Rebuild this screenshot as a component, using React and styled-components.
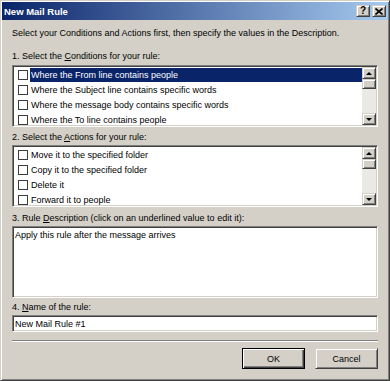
import styled, { createGlobalStyle } from "styled-components";

const CONDITIONS = [
  "Where the From line contains people",
  "Where the Subject line contains specific words",
  "Where the message body contains specific words",
  "Where the To line contains people",
];

const ACTIONS = [
  "Move it to the specified folder",
  "Copy it to the specified folder",
  "Delete it",
  "Forward it to people",
];

const GlobalStyle = createGlobalStyle`
  html, body {
    margin: 0;
    padding: 0;
    background: #d4d0c8;
  }
  body {
    font-family: "Liberation Sans", Arial, sans-serif;
    font-size: 9px;
    color: #000;
  }
`;

const raised = `
  border: 1px solid;
  border-color: #d4d0c8 #404040 #404040 #d4d0c8;
  box-shadow: inset 1px 1px #fff, inset -1px -1px #808080;
  background: #d4d0c8;
`;

const sunken = `
  border: 1px solid;
  border-color: #808080 #fff #fff #808080;
  box-shadow: inset 1px 1px #404040, inset -1px -1px #d4d0c8;
  background: #fff;
`;

const Window = styled.div`
  box-sizing: border-box;
  width: 390px;
  height: 381px;
  padding: 1px;
  border: 1px solid;
  border-color: #d4d0c8 #404040 #404040 #d4d0c8;
  box-shadow: inset 1px 1px #fff, inset -1px -1px #808080;
  background: #d4d0c8;
  display: flex;
  flex-direction: column;
`;

const TitleBar = styled.div`
  height: 18px;
  display: flex;
  align-items: center;
  padding-left: 2px;
  background: linear-gradient(to right, #0a246a, #a6caf0);
  color: #fff;
  font-weight: bold;
  font-size: 9.5px;
`;

const TitleText = styled.span`
  flex: 1;
`;

const TitleButton = styled.div`
  box-sizing: border-box;
  width: 14px;
  height: 12px;
  margin-left: 2px;
  ${raised}
  display: flex;
  align-items: center;
  justify-content: center;
  color: #000;
  font-weight: bold;
  font-size: 10px;
  line-height: 1;
  &:last-child {
    margin-right: 2px;
  }
`;

const Body = styled.div`
  flex: 1;
  display: flex;
  flex-direction: column;
  padding: 0 10px;
`;

const Text = styled.div`
  line-height: 14px;
  margin-top: ${({ $top }) => $top}px;
  white-space: nowrap;
`;

const ListBox = styled.div`
  box-sizing: border-box;
  height: 62px;
  margin-top: ${({ $top }) => $top}px;
  padding: 1px;
  ${sunken}
  display: flex;
  overflow: hidden;
`;

const Rows = styled.div`
  flex: 1;
  display: flex;
  flex-direction: column;
  overflow: hidden;
`;

const Row = styled.div`
  flex: none;
  height: 15px;
  display: flex;
  align-items: center;
`;

const Check = styled.span`
  box-sizing: border-box;
  width: 10px;
  height: 10px;
  margin-left: 4px;
  border: 1px solid #3c3c3c;
  background: #fff;
  flex: none;
`;

const RowLabel = styled.span`
  flex: 1;
  margin-left: 2px;
  padding-left: 1px;
  height: 14px;
  line-height: 14px;
  white-space: nowrap;
  background: ${({ $selected }) => ($selected ? "#0a246a" : "transparent")};
  color: ${({ $selected }) => ($selected ? "#fff" : "#000")};
`;

const Scrollbar = styled.div`
  width: 14px;
  display: flex;
  flex-direction: column;
  background-color: #ebe9e5;
`;

const ScrollButton = styled.div`
  box-sizing: border-box;
  height: 12px;
  ${raised}
  display: flex;
  align-items: center;
  justify-content: center;
`;

const Thumb = styled.div`
  box-sizing: border-box;
  height: 10px;
  ${raised}
`;

const Track = styled.div`
  flex: 1;
`;

const Arrow = styled.span`
  width: 0;
  height: 0;
  border-left: 3px solid transparent;
  border-right: 3px solid transparent;
  ${({ $down }) =>
    $down ? "border-top: 3px solid #000;" : "border-bottom: 3px solid #000;"}
`;

const TextArea = styled.div`
  box-sizing: border-box;
  height: 72px;
  margin-top: 1px;
  padding: 1px 2px;
  ${sunken}
  line-height: 14px;
`;

const NameInput = styled.div`
  box-sizing: border-box;
  height: 17px;
  margin-top: 1px;
  padding: 1px 2px 0 2px;
  ${sunken}
  line-height: 14px;
`;

const Separator = styled.div`
  margin-top: 8px;
  border-top: 1px solid #808080;
  border-bottom: 1px solid #fff;
`;

const ButtonRow = styled.div`
  margin-top: 6px;
  display: flex;
  justify-content: flex-end;
  gap: 10px;
`;

const Button = styled.div`
  box-sizing: border-box;
  width: 63px;
  height: 21px;
  display: flex;
  align-items: center;
  justify-content: center;
  ${raised}
  ${({ $default }) =>
    $default &&
    `
    border-color: #000;
    box-shadow: inset 1px 1px #fff, inset -1px -1px #404040, inset -2px -2px #808080;
  `}
`;

const CheckList = ({ items, top, selected }) => (
  <ListBox $top={top}>
    <Rows>
      {items.map((item, i) => (
        <Row key={item}>
          <Check />
          <RowLabel $selected={i === selected}>{item}</RowLabel>
        </Row>
      ))}
    </Rows>
    <Scrollbar>
      <ScrollButton>
        <Arrow />
      </ScrollButton>
      <Thumb />
      <Track />
      <ScrollButton>
        <Arrow $down />
      </ScrollButton>
    </Scrollbar>
  </ListBox>
);

const App = () => {
  return (
    <>
      <GlobalStyle />
      <Window>
        <TitleBar>
          <TitleText>New Mail Rule</TitleText>
          <TitleButton>?</TitleButton>
          <TitleButton>
            <svg width="8" height="7" viewBox="0 0 8 7">
              <path d="M0.5 0.5 L7.5 6.5 M7.5 0.5 L0.5 6.5" stroke="#000" strokeWidth="1.6" />
            </svg>
          </TitleButton>
        </TitleBar>
        <Body>
          <Text $top={6}>
            Select your Conditions and Actions first, then specify the values in the Description.
          </Text>
          <Text $top={9}>
            1. Select the <u>C</u>onditions for your rule:
          </Text>
          <CheckList items={CONDITIONS} top={2} selected={0} />
          <Text $top={3}>
            2. Select the <u>A</u>ctions for your rule:
          </Text>
          <CheckList items={ACTIONS} top={1} selected={-1} />
          <Text $top={4}>
            3. Rule <u>D</u>escription (click on an underlined value to edit it):
          </Text>
          <TextArea>Apply this rule after the message arrives</TextArea>
          <Text $top={2}>
            4. <u>N</u>ame of the rule:
          </Text>
          <NameInput>New Mail Rule #1</NameInput>
          <Separator />
          <ButtonRow>
            <Button $default>OK</Button>
            <Button>Cancel</Button>
          </ButtonRow>
        </Body>
      </Window>
    </>
  );
};

export default App;
